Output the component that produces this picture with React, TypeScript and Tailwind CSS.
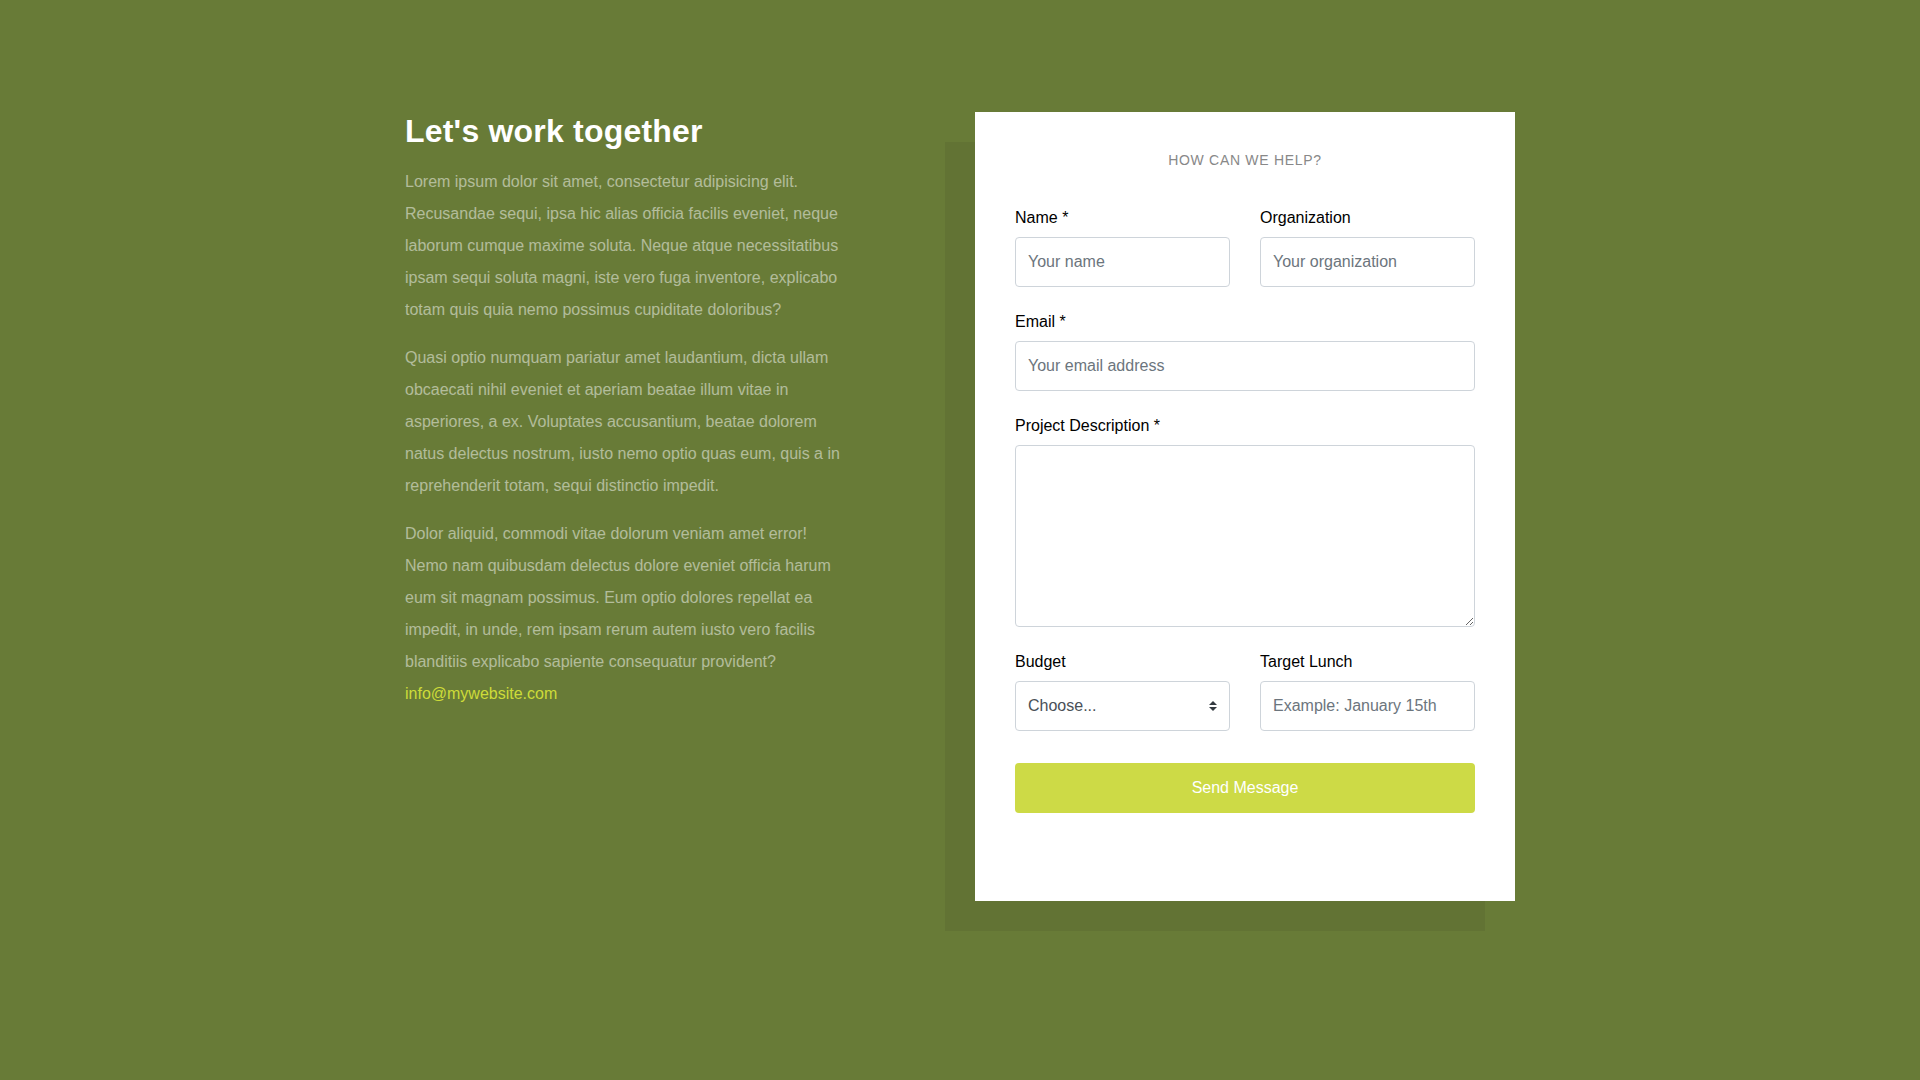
import React from 'react';

function Field({ label, children }: { label: string; children: React.ReactNode }) {
  return (
    <div className="mb-[22px]">
      <label className="mb-[7px] block pt-[1px] text-[16px] leading-6 text-black">{label}</label>
      {children}
    </div>
  );
}

const inputCls =
  'block h-[50px] w-full rounded-[4px] border border-[#ced4da] bg-white px-3 text-[16px] text-[#495057] placeholder:text-[#6c757d] outline-none';

export default function App() {
  return (
    <div
      className="min-h-screen w-full bg-[#687b37] pt-[112px]"
      style={{ fontFamily: '"Liberation Sans", Arial, sans-serif' }}
    >
      <div className="mx-auto flex w-[1140px]">
        <div className="w-[475px] px-[15px]">
          <h2 className="mb-4 text-[32px] font-bold leading-[1.2] tracking-[0.2px] text-white">Let's work together</h2>
          <p className="mb-4 text-[16px] leading-8 text-white/50">
            Lorem ipsum dolor sit amet, consectetur adipisicing elit. Recusandae sequi, ipsa hic alias officia
            facilis eveniet, neque laborum cumque maxime soluta. Neque atque necessitatibus ipsam sequi soluta
            magni, iste vero fuga inventore, explicabo totam quis quia nemo possimus cupiditate doloribus?
          </p>
          <p className="mb-4 text-[16px] leading-8 text-white/50">
            Quasi optio numquam pariatur amet laudantium, dicta ullam obcaecati nihil eveniet et aperiam beatae
            illum vitae in asperiores, a ex. Voluptates accusantium, beatae dolorem natus delectus nostrum, iusto
            nemo optio quas eum, quis a in reprehenderit totam, sequi distinctio impedit.
          </p>
          <p className="mb-4 text-[16px] leading-8 text-white/50">
            Dolor aliquid, commodi vitae dolorum veniam amet error! Nemo nam quibusdam delectus dolore eveniet
            officia harum eum sit magnam possimus. Eum optio dolores repellat ea impedit, in unde, rem ipsam rerum
            autem iusto vero facilis blanditiis explicabo sapiente consequatur provident?
            <br />
            <a href="#" className="text-[#cddc39]">
              info@mywebsite.com
            </a>
          </p>
        </div>

        <div className="ml-[95px] w-[570px] px-[15px]">
          <div className="relative">
            <div className="absolute left-[-30px] top-[30px] h-full w-full bg-[#627334]" />
            <div className="relative bg-white px-10 pb-[88px] pt-10">
              <h3 className="mb-[37px] text-center text-[14px] uppercase leading-4 tracking-[0.7px] text-[#888888]">
                How can we help?
              </h3>
              <form onSubmit={(e) => e.preventDefault()}>
                <div className="grid grid-cols-2 gap-x-[30px]">
                  <Field label="Name *">
                    <input type="text" placeholder="Your name" className={inputCls} />
                  </Field>
                  <Field label="Organization">
                    <input type="text" placeholder="Your organization" className={inputCls} />
                  </Field>
                </div>
                <Field label="Email *">
                  <input type="email" placeholder="Your email address" className={inputCls} />
                </Field>
                <Field label="Project Description *">
                  <textarea className="block h-[182px] w-full rounded-[4px] border border-[#ced4da] bg-white px-3 py-2 text-[16px] text-[#495057] outline-none" />
                </Field>
                <div className="grid grid-cols-2 gap-x-[30px]">
                  <Field label="Budget">
                    <div className="relative">
                      <select className={inputCls + ' appearance-none pr-8'} defaultValue="">
                        <option value="">Choose...</option>
                        <option>$1000 below</option>
                        <option>$2,000 - $5,000</option>
                        <option>$5,000 - $15,000</option>
                      </select>
                      <svg
                        className="pointer-events-none absolute right-[13px] top-1/2 h-[10px] w-2 -translate-y-1/2"
                        viewBox="0 0 4 5"
                      >
                        <path fill="#343a40" d="M2 0L0 2h4zm0 5L0 3h4z" />
                      </svg>
                    </div>
                  </Field>
                  <Field label="Target Lunch">
                    <input type="text" placeholder="Example: January 15th" className={inputCls} />
                  </Field>
                </div>
                <button
                  type="submit"
                  className="mt-[10px] block h-[50px] w-full rounded-[4px] bg-[#cdda46] text-[16px] text-white"
                >
                  Send Message
                </button>
              </form>
            </div>
          </div>
        </div>
      </div>
    </div>
  );
}
